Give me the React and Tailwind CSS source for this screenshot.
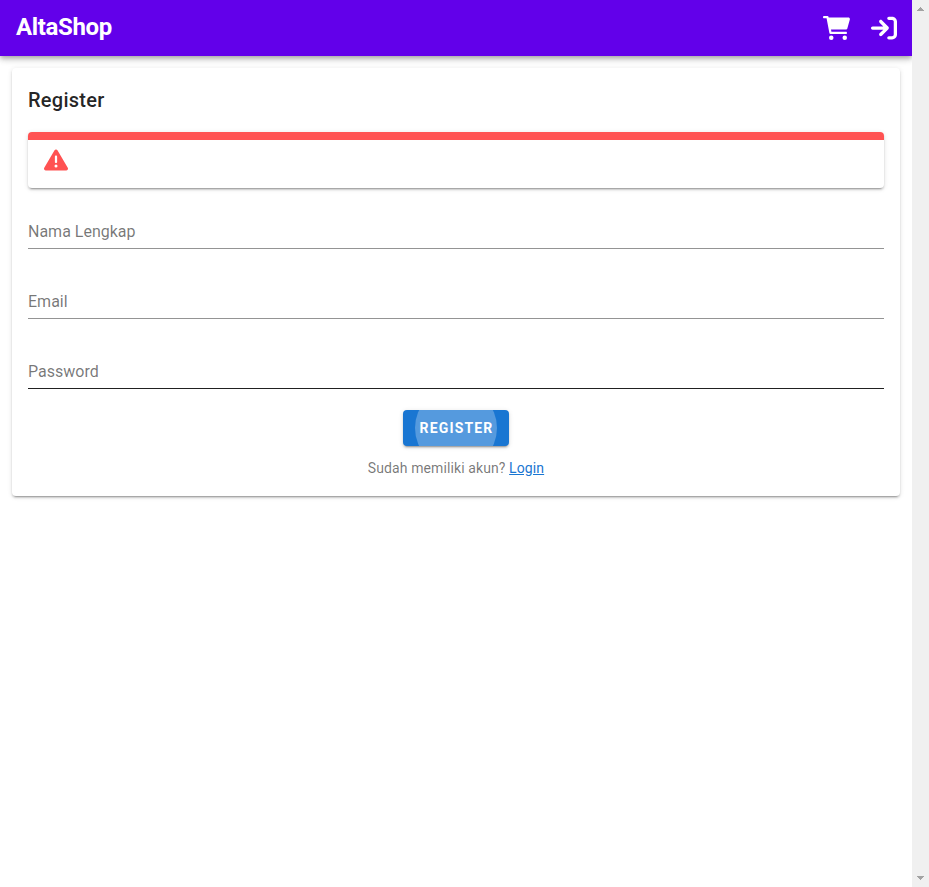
import React from "react";
import { FaArrowRightToBracket, FaTriangleExclamation } from "react-icons/fa6";

const cardShadow =
  "shadow-[0_3px_1px_-2px_rgba(0,0,0,0.2),0_2px_2px_0_rgba(0,0,0,0.14),0_1px_5px_0_rgba(0,0,0,0.12)]";

function CartIcon() {
  return (
    <svg className="h-6 w-[27px]" viewBox="0 0 576 512" fill="currentColor">
      <path d="M96 0C107.5 0 117.4 8.19 119.6 19.51L121.1 32H541.8C562.1 32 578.3 52.25 572.6 72.66L518.6 264.7C514.7 278.5 502.1 288 487.8 288H170.7L179.9 336H488C501.3 336 512 346.7 512 360C512 373.3 501.3 384 488 384H159.1C148.5 384 138.6 375.8 136.4 364.5L76.14 48H24C10.75 48 0 37.25 0 24C0 10.75 10.75 0 24 0H96z" />
      <circle cx="176" cy="464" r="48" />
      <circle cx="464" cy="464" r="48" />
    </svg>
  );
}

function Field({ label, active }) {
  return (
    <label
      className={`flex h-[37px] items-start border-b text-base leading-5 text-black/54 ${
        active ? "border-black/87" : "border-black/42"
      }`}
    >
      <span className="mt-[10px]">{label}</span>
    </label>
  );
}

function Scrollbar() {
  return (
    <div className="flex w-[17px] shrink-0 flex-col items-center justify-between bg-[#f0f0f0] py-[7px] text-[#a3a3a3]">
      <svg width="7" height="4" viewBox="0 0 7 4" fill="currentColor" shapeRendering="crispEdges">
        <path d="M3 0h1v1h1v1h1v1h1v1H0V3h1V2h1V1h1z" />
      </svg>
      <svg width="7" height="4" viewBox="0 0 7 4" fill="currentColor" shapeRendering="crispEdges">
        <path d="M0 0h7v1H6v1H5v1H4v1H3V3H2V2H1V1H0z" />
      </svg>
    </div>
  );
}

export default function App() {
  return (
    <div className="flex h-screen overflow-hidden bg-white font-['Roboto',sans-serif] text-black/87">
      <div className="flex min-w-0 flex-1 flex-col">
        <header className="flex h-14 shrink-0 items-center justify-between bg-[#6200ea] pr-[15px] pl-4 text-white shadow-[0_2px_4px_-1px_rgba(0,0,0,0.2),0_4px_5px_0_rgba(0,0,0,0.14),0_1px_10px_0_rgba(0,0,0,0.12)]">
          <span className="mb-0.5 text-2xl leading-8 font-bold tracking-[-0.35px]">AltaShop</span>
          <div className="flex items-center gap-[21px]">
            <CartIcon />
            <FaArrowRightToBracket className="h-[26px] w-[26px]" />
          </div>
        </header>

        <main className="p-3">
          <section className={`flex h-[428px] flex-col rounded bg-white px-4 ${cardShadow}`}>
            <h1 className="mt-4 text-xl leading-8 font-medium tracking-[0.25px]">Register</h1>

            <div className={`mt-4 h-14 shrink-0 overflow-hidden rounded ${cardShadow}`}>
              <div className="h-2 bg-[#ff5252]" />
              <div className="px-4 pt-2">
                <FaTriangleExclamation className="h-6 w-6 text-[#ff5252]" />
              </div>
            </div>

            <form className="mt-6 flex flex-col gap-[33px]">
              <Field label="Nama Lengkap" />
              <Field label="Email" />
              <Field label="Password" active />
            </form>

            <div className="mt-[21px] flex flex-col items-center">
              <button
                type="button"
                className="relative h-9 w-[106px] overflow-hidden rounded bg-[#1976d2] pl-px text-sm font-bold tracking-[1.15px] text-white shadow-[0_3px_1px_-2px_rgba(0,0,0,0.2),0_2px_2px_0_rgba(0,0,0,0.14),0_1px_5px_0_rgba(0,0,0,0.12)]"
              >
                <span className="absolute top-1/2 left-1/2 h-[82px] w-[82px] -translate-x-1/2 -translate-y-1/2 rounded-full bg-white/26" />
                <span className="relative">REGISTER</span>
              </button>
              <p className="mt-[11px] text-sm leading-[22px] tracking-[0.1px] text-black/54">
                Sudah memiliki akun?{" "}
                <a className="text-[#1976d2] underline">Login</a>
              </p>
            </div>
          </section>
        </main>
      </div>
      <Scrollbar />
    </div>
  );
}
